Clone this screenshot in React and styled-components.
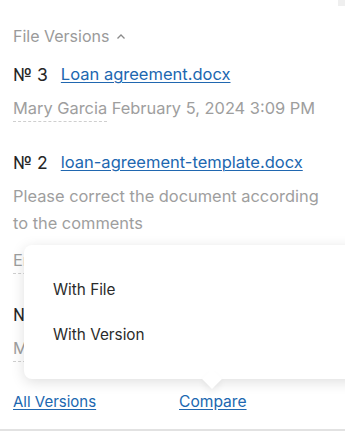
import React from "react";
import styled, { createGlobalStyle } from "styled-components";

const GlobalStyle = createGlobalStyle`
  html, body {
    margin: 0;
    padding: 0;
    background: #fff;
  }
  body {
    font-family: Inter, "Noto Sans", sans-serif;
    -webkit-font-smoothing: antialiased;
  }
`;

const Panel = styled.div`
  position: relative;
  width: 345px;
  padding: 26px 0 0 13px;
  box-sizing: border-box;
  border-bottom: 2px solid #e2e2e2;
  overflow: hidden;
`;

const ScrollNub = styled.div`
  position: absolute;
  top: 0;
  right: 0;
  width: 7px;
  height: 6px;
  background: #efefef;
`;

const Header = styled.div`
  display: flex;
  align-items: center;
  gap: 7px;
  height: 20px;
  font-size: 16px;
  color: #9a9a9a;
  margin-bottom: 16px;
`;

const Version = styled.div`
  display: flex;
  flex-direction: column;
  margin-bottom: ${({ $last }) => ($last ? "29px" : "28px")};
`;

const TitleRow = styled.div`
  display: flex;
  align-items: center;
  gap: 13px;
  height: 24px;
  margin-bottom: 9px;
`;

const Num = styled.span`
  font-size: 17.5px;
  color: #262626;
`;

const FileLink = styled.a`
  font-size: 16.5px;
  color: #2067b0;
  text-decoration: underline;
  text-underline-offset: 2px;
  text-decoration-thickness: 1px;
`;

const Meta = styled.div`
  font-size: 16.4px;
  line-height: 27px;
  color: #9e9e9e;
  margin-bottom: ${({ $gap }) => ($gap ? "10px" : "0")};
  padding-right: 14px;
`;

const Author = styled.span`
  text-decoration: underline dashed #cfcfcf;
  text-decoration-thickness: 1px;
  text-underline-offset: 7px;
`;

const Footer = styled.div`
  display: flex;
  align-items: center;
  height: 20px;
  padding-bottom: 18px;
`;

const FooterLink = styled.a`
  font-size: ${({ $size }) => $size || "15px"};
  color: #2067b0;
  text-decoration: underline;
  text-underline-offset: 2px;
  width: ${({ $w }) => $w || "auto"};
`;

const Popup = styled.div`
  position: absolute;
  left: 24px;
  top: 245px;
  width: 340px;
  padding: 22px 0;
  background: #fff;
  border-radius: 8px;
  box-shadow: 0 3px 14px rgba(0, 0, 0, 0.13);
  &::after {
    content: "";
    position: absolute;
    left: 181px;
    bottom: -7px;
    width: 14px;
    height: 14px;
    background: #fff;
    transform: rotate(45deg);
    box-shadow: 3px 3px 6px rgba(0, 0, 0, 0.06);
  }
`;

const MenuItem = styled.div`
  position: relative;
  z-index: 1;
  height: 45px;
  line-height: 45px;
  padding-left: 29px;
  font-size: 15.3px;
  color: #2b2b2b;
`;

const Chevron = () => (
  <svg width="10" height="7" viewBox="0 0 10 7" fill="none">
    <path d="M1.5 5.5 L5 2 L8.5 5.5" stroke="#8a8a8a" strokeWidth="1.3" />
  </svg>
);

export default function App() {
  return (
    <>
      <GlobalStyle />
      <Panel>
        <ScrollNub />
        <Header>
          File Versions <Chevron />
        </Header>
        <Version>
          <TitleRow>
            <Num>№ 3</Num>
            <FileLink href="#">Loan agreement.docx</FileLink>
          </TitleRow>
          <Meta>
            <Author>Mary Garcia</Author> February 5, 2024 3:09 PM
          </Meta>
        </Version>
        <Version>
          <TitleRow>
            <Num>№ 2</Num>
            <FileLink href="#">loan-agreement-template.docx</FileLink>
          </TitleRow>
          <Meta $gap>Please correct the document according to the comments</Meta>
          <Meta>
            <Author>Eric Johnson</Author> February 2, 2024 11:40 AM
          </Meta>
        </Version>
        <Version $last>
          <TitleRow>
            <Num>№ 1</Num>
            <FileLink href="#">loan-agreement.docx</FileLink>
          </TitleRow>
          <Meta>
            <Author>Mary Garcia</Author> February 1, 2024 10:15 AM
          </Meta>
        </Version>
        <Footer>
          <FooterLink href="#" $w="166px">All Versions</FooterLink>
          <FooterLink href="#" $size="15.6px">Compare</FooterLink>
        </Footer>
        <Popup>
          <MenuItem>With File</MenuItem>
          <MenuItem>With Version</MenuItem>
        </Popup>
      </Panel>
    </>
  );
}
